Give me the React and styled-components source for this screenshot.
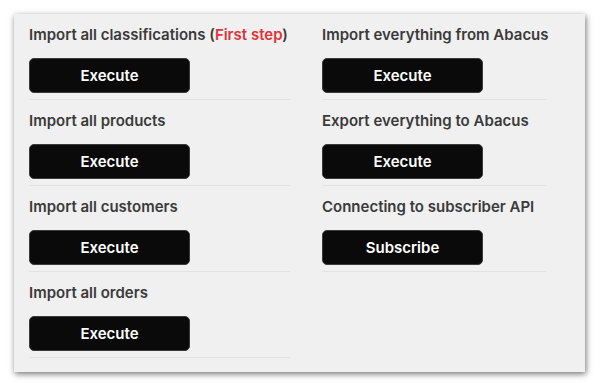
import React from 'react'
import styled, { createGlobalStyle } from 'styled-components'

const GlobalStyle = createGlobalStyle`
  body {
    margin: 0;
    background: #ffffff;
    font-family: Inter, "Open Sans", sans-serif;
  }
`

const Page = styled.div`
  padding: 14px 15px 16px 14px;
`

const Panel = styled.div`
  background: #f0f0f0;
  box-shadow: 1px 2px 6px rgba(0, 0, 0, 0.55);
  padding: 11px 0 14px 15px;
  display: flex;
  gap: 32px;
  box-sizing: border-box;
`

const Column = styled.div`
  width: ${p => p.width}px;
  display: flex;
  flex-direction: column;
`

const Item = styled.div`
  border-bottom: 1px solid #e2e2e2;
  padding: 0 0 6px;
  margin-bottom: 11px;

  &:last-child {
    margin-bottom: 0;
  }
`

const Label = styled.div`
  font-size: 15px;
  line-height: 20px;
  font-weight: 600;
  color: #3a3a3a;
  margin-bottom: 13px;
  white-space: nowrap;
`

const Red = styled.span`
  color: #e0323a;
`

const Button = styled.button`
  display: block;
  width: 161px;
  height: 35px;
  background: #0a0a0a;
  color: #ffffff;
  border: 1px solid #3a3a3a;
  border-radius: 5px;
  font-family: Inter, "Open Sans", sans-serif;
  font-size: 15px;
  font-weight: 600;
  cursor: pointer;
`

const left = [
  { label: <>Import all classifications (<Red>First step</Red>)</>, action: 'Execute' },
  { label: 'Import all products', action: 'Execute' },
  { label: 'Import all customers', action: 'Execute' },
  { label: 'Import all orders', action: 'Execute' },
]

const right = [
  { label: 'Import everything from Abacus', action: 'Execute' },
  { label: 'Export everything to Abacus', action: 'Execute' },
  { label: 'Connecting to subscriber API', action: 'Subscribe' },
]

const App = () => {
  return (
    <>
      <GlobalStyle />
      <Page>
        <Panel>
          <Column width={261}>
            {left.map((it, i) => (
              <Item key={i}>
                <Label>{it.label}</Label>
                <Button>{it.action}</Button>
              </Item>
            ))}
          </Column>
          <Column width={224}>
            {right.map((it, i) => (
              <Item key={i}>
                <Label>{it.label}</Label>
                <Button>{it.action}</Button>
              </Item>
            ))}
          </Column>
        </Panel>
      </Page>
    </>
  )
}

export default App
